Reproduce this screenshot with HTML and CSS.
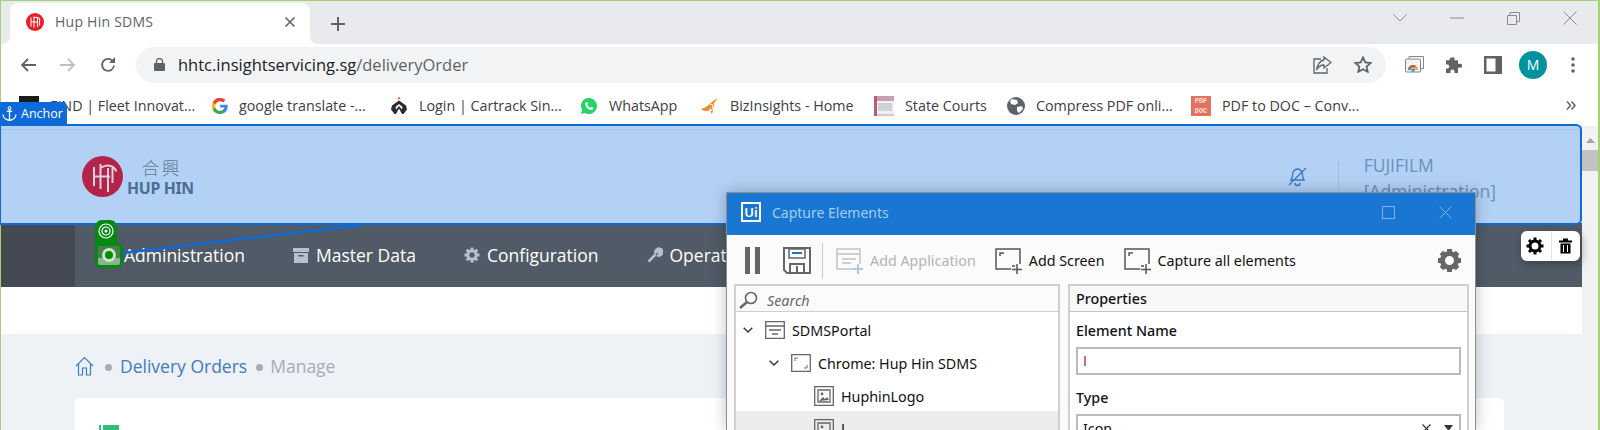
FILE: index.html
```html
<!DOCTYPE html>
<html lang="en">
<head>
    <meta charset="UTF-8">
    <title>Hup Hin SDMS</title>
    <link rel="stylesheet" href="styles.css">
</head>
<body>
    <div class="window">
        <div class="tabstrip">
            <div class="tab">
                <svg class="favicon" width="18" height="18" viewBox="0 0 18 18"><circle cx="9" cy="9" r="9" fill="#ef1c25"/><path d="M5 4.500v9M8 3.500v11M5 9h7M8 5c3-1.500 5-.5 6 2M11.500 5v9M13.500 6.500v6" fill="none" stroke="#fff" stroke-width="1.100"/></svg>
                <span class="tab-title">Hup Hin SDMS</span>
                <svg class="tab-close" width="12" height="12" viewBox="0 0 12 12"><path d="M1.500 1.500l9 9M10.500 1.500l-9 9" stroke="#5f6368" stroke-width="1.600"/></svg>
            </div>
            <svg class="new-tab" width="16" height="16" viewBox="0 0 16 16"><path d="M8 1v14M1 8h14" stroke="#5f6368" stroke-width="2"/></svg>
            <div class="win-controls">
                <svg width="14" height="8" viewBox="0 0 14 8"><path d="M.5.500L7 7 13.500.500" fill="none" stroke="#8a8d91"/></svg>
                <svg width="14" height="2" viewBox="0 0 14 2"><path d="M0 1h14" stroke="#8a8d91"/></svg>
                <svg width="13" height="13" viewBox="0 0 13 13"><path d="M.5 3.500h9v9h-9zM3 3V.5h9.500v9H10" fill="none" stroke="#8a8d91"/></svg>
                <svg width="14" height="14" viewBox="0 0 14 14"><path d="M.5.500l13 13M13.500.500l-13 13" stroke="#8a8d91"/></svg>
            </div>
        </div>

        <div class="toolbar">
            <svg class="nav-icon" width="16" height="14" viewBox="0 0 16 14"><path d="M16 7H2M8 1L2 7l6 6" fill="none" stroke="#5f6368" stroke-width="1.800"/></svg>
            <svg class="nav-icon nav-forward" width="16" height="14" viewBox="0 0 16 14"><path d="M0 7h14M8 1l6 6-6 6" fill="none" stroke="#bdc1c6" stroke-width="1.800"/></svg>
            <svg class="nav-icon" width="18" height="18" viewBox="0 0 18 18"><path d="M15 9.500A6 6 0 1 1 13.200 4.500" fill="none" stroke="#5f6368" stroke-width="1.800"/><path d="M16 1v6h-6z" fill="#5f6368"/></svg>
            <div class="omnibox">
                <svg width="11" height="13" viewBox="0 0 11 13"><path d="M2.500 5V3.500a3 3 0 0 1 6 0V5" fill="none" stroke="#5f6368" stroke-width="1.300"/><rect y="5" width="11" height="8" rx="1" fill="#5f6368"/></svg>
                <span class="url">hhtc.insightservicing.sg<span class="url-path">/deliveryOrder</span></span>
                <svg class="share" width="19" height="18" viewBox="0 0 19 18"><path d="M8 3H1v14h13v-5" fill="none" stroke="#5f6368" stroke-width="1.300"/><path d="M11 1l7 5.500-7 5.500V9C7 9 5 11 3.500 14 4 9 7 4.500 11 4z" fill="none" stroke="#5f6368" stroke-width="1.300"/></svg>
                <svg class="star" width="18" height="17" viewBox="0 0 18 17"><path d="M9 1.500l2.300 5 5.200.6-3.900 3.500 1.100 5.200L9 13.200l-4.700 2.600 1.100-5.200L1.500 7.100l5.200-.6z" fill="none" stroke="#5f6368" stroke-width="1.800"/></svg>
            </div>
            <div class="ext-icons">
                <svg width="19" height="17" viewBox="0 0 19 17"><path d="M4 2.500V.5h14.500v12H16" fill="none" stroke="#80868b"/><rect x=".5" y="3" width="15" height="13" rx="1" fill="#f1f3f4" stroke="#80868b"/><path d="M3 14a5 5 0 0 1 10 0h-2.500a2.500 2.500 0 0 0-5 0z" fill="#ea4335"/><path d="M3 14a5 5 0 0 1 2-4l1.500 2a2.500 2.500 0 0 0-1 2z" fill="#34a853"/><path d="M13 14a5 5 0 0 0-2-4l-1.500 2a2.500 2.500 0 0 1 1 2z" fill="#fbbc05"/><circle cx="8" cy="14" r="1.800" fill="#4285f4"/></svg>
                <svg width="18" height="18" viewBox="0 0 18 18"><path d="M7 1.500h3.500v2.700a1.800 1.800 0 0 1 0 0H14v3.500h2.200a2 2 0 0 1 0 4H14V17h-3.500v-1.600a2 2 0 0 0-4 0V17H2v-4.500h1.300a2 2 0 0 0 0-4H2V4.200h3.500V3.500A2 2 0 0 1 7 1.500z" fill="#5f6368"/></svg>
                <svg class="ext-panel" width="18" height="18" viewBox="0 0 18 18"><path d="M0 0h18v18H0zM2.500 2.500v13h9v-13z" fill="#5f6368" fill-rule="evenodd"/></svg>
                <span class="avatar">M</span>
                <svg width="4" height="16" viewBox="0 0 4 16"><circle cx="2" cy="2" r="1.800" fill="#5f6368"/><circle cx="2" cy="8" r="1.800" fill="#5f6368"/><circle cx="2" cy="14" r="1.800" fill="#5f6368"/></svg>
            </div>
        </div>

        <div class="bookmarks">
            <a class="bookmark w-fleet"><span class="bm-black"></span>FIND | Fleet Innovat...</a>
            <a class="bookmark w-google">
                <svg width="16" height="16" viewBox="0 0 16 16"><path d="M15.700 8.200c0-.6 0-1-.1-1.500H8v2.900h4.400c-.2 1-.8 1.800-1.600 2.400v2h2.600c1.500-1.400 2.300-3.400 2.300-5.800z" fill="#4285f4"/><path d="M8 16c2.200 0 4-.7 5.400-2l-2.600-2c-.7.500-1.700.8-2.800.8-2.100 0-3.900-1.400-4.600-3.400H.7v2.100A8 8 0 0 0 8 16z" fill="#34a853"/><path d="M3.400 9.400a4.800 4.800 0 0 1 0-3V4.300H.7a8 8 0 0 0 0 7.200z" fill="#fbbc05"/><path d="M8 3.200c1.200 0 2.300.4 3.100 1.200l2.400-2.300A8 8 0 0 0 .7 4.300l2.700 2.100C4.100 4.500 5.900 3.200 8 3.200z" fill="#ea4335"/></svg>
                google translate -...
            </a>
            <a class="bookmark w-cartrack">
                <svg width="18" height="18" viewBox="0 0 18 18"><circle cx="9" cy="1.300" r="1.200" fill="#e8772e"/><path d="M9 3.500l7 5 1 4-3.500 4.500H12L9 11.500 6 17H4.500L1 12.500l1-4z" fill="#2b2b2b"/><path d="M9 7l3.500 3-.5 2.500L9 9l-3 3.500-.5-2.500z" fill="#fff"/></svg>
                Login | Cartrack Sin...
            </a>
            <a class="bookmark w-whatsapp">
                <svg width="18" height="18" viewBox="0 0 18 18"><path d="M9 1a8 8 0 0 0-6.800 12.200L1 17l3.900-1.100A8 8 0 1 0 9 1z" fill="#25d366"/><path d="M6.500 5c-.5 0-1.300.7-1.300 2 0 2.600 3.300 6 6 6 1.300 0 2.100-.8 2.100-1.500v-.8l-2-1-.9 1C9 10.200 7.800 9 7.300 7.800l.9-.9-.9-1.900z" fill="#fff"/></svg>
                WhatsApp
            </a>
            <a class="bookmark w-biz">
                <svg width="18" height="18" viewBox="0 0 18 18"><path d="M0 12C4 11 8 8 12 4l5-3-4 5c0 4-1 8-2 11-1-1-2-3-1-6l-3 3c-2 0-5 0-7-2z" fill="#f28a2e"/><path d="M9 8c2-1 3-1 3 1s-1 4-2 5" fill="none" stroke="#fff"/></svg>
                BizInsights - Home
            </a>
            <a class="bookmark w-courts">
                <svg width="20" height="20" viewBox="0 0 20 20"><rect width="20" height="20" fill="#f3eeef"/><rect width="20" height="5" fill="#c9a0ac"/><rect x="4" y="7" width="14" height="8" fill="#cfd2d4"/><rect width="3" height="20" fill="#b75d78"/><rect x="3" y="18" width="17" height="2" fill="#ddc5cc"/></svg>
                State Courts
            </a>
            <a class="bookmark w-compress">
                <svg width="18" height="18" viewBox="0 0 18 18"><circle cx="9" cy="9" r="9" fill="#5f6368"/><path d="M5 2l5 1 1 3-3 2-4-1-1-3zM10 10l5-1 1 3-4 4-2-2z" fill="#fff"/></svg>
                Compress PDF onli...
            </a>
            <a class="bookmark w-pdf">
                <span class="pdf-icon">PDF<br>DOC</span>
                PDF to DOC – Conv...
            </a>
            <svg class="more" width="10" height="9" viewBox="0 0 10 9"><path d="M1 .5l3.500 4L1 8.500M5.500.5l3.500 4-3.500 4" fill="none" stroke="#5f6368" stroke-width="1.500"/></svg>
        </div>

        <div class="viewport">
            <div class="page">
                <header class="site-header">
                    <div class="logo">
                        <svg class="logo-mark" width="41" height="41" viewBox="0 0 41 41"><circle cx="20.500" cy="20.500" r="20.500" fill="#b32548"/><path d="M12 11v19M18.500 8v25M12 20.500h16M18.500 12c6-4 13-3 16 3.500M26 12v24M30.500 12v15" fill="none" stroke="#dfd0e0" stroke-width="2"/></svg>
                        <div class="logo-text">
                            <span class="logo-cjk">合興</span>
                            <span class="logo-latin">HUP HIN</span>
                        </div>
                    </div>
                    <div class="header-user">
                        <svg width="22" height="22" viewBox="0 0 22 22"><path d="M5 15c2-2 1-5 2-7.500C8 5 10 4 11.500 4S15 5 16 7.500c1 2.500 0 5 2 7.500H5zM9 18a2.500 2.500 0 0 0 5 0M3 20L20 3" fill="none" stroke="#3f76bd" stroke-width="1.400"/></svg>
                        <span class="header-sep"></span>
                        <div class="user-name">FUJIFILM<br>[Administration]</div>
                    </div>
                </header>

                <nav class="site-nav">
                    <div class="nav-side"></div>
                    <div class="nav-items">
                        <a class="nav-item">Administration</a>
                        <a class="nav-item">
                            <svg width="16" height="15" viewBox="0 0 16 15"><path d="M0 0h16v4H0zM1 5h14v10H1z" fill="#b8c0c9"/><rect x="5.500" y="7" width="5" height="1.500" fill="#505b67"/></svg>
                            Master Data
                        </a>
                        <a class="nav-item">
                            <svg width="16" height="16" viewBox="0 0 16 16"><circle cx="8" cy="8" r="4.200" fill="none" stroke="#b8c0c9" stroke-width="3"/><path d="M8 .5v3M8 12.500v3M.5 8h3M12.500 8h3M2.700 2.700l2.100 2.100M11.200 11.200l2.100 2.100M13.300 2.700l-2.100 2.100M4.800 11.200l-2.100 2.100" stroke="#b8c0c9" stroke-width="3"/></svg>
                            Configuration
                        </a>
                        <a class="nav-item">
                            <svg width="16" height="16" viewBox="0 0 16 16"><path d="M1.500 14.500l7-7M9 7a3.500 3.500 0 0 1 4.500-5L11 4.500l.5 1 1 .5L15 3.500A3.500 3.500 0 0 1 10 8" fill="none" stroke="#b8c0c9" stroke-width="2.500"/></svg>
                            Operations
                        </a>
                    </div>
                </nav>

                <div class="nav-gap"></div>

                <main class="content">
                    <div class="breadcrumb">
                        <svg class="crumb-home" width="19" height="20" viewBox="0 0 19 20"><path d="M1 10l8.500-8.500L18 10M3.500 8v11h4v-7h4v7h4V8" fill="none" stroke="#3f7cbd" stroke-width="1.200"/></svg>
                        <span class="crumb-dot"></span>
                        <a class="crumb-link">Delivery Orders</a>
                        <span class="crumb-dot"></span>
                        <span class="crumb-current">Manage</span>
                    </div>
                    <div class="card">
                        <span class="card-icon"></span>
                    </div>
                </main>
            </div>
            <div class="scrollbar">
                <svg width="9" height="5" viewBox="0 0 9 5"><path d="M4.500 0L9 5H0z" fill="#a3a3a3"/></svg>
                <span class="scroll-thumb"></span>
            </div>
        </div>
    </div>

    <!-- capture overlay drawn over the browser -->
    <div class="anchor-box"></div>
    <div class="anchor-tag">
        <svg width="15" height="15" viewBox="0 0 14 14"><path d="M7 3v10.500M4.500 5h5M1 8c0 3 3 5 6 5.500 3-.5 6-2.500 6-5.500" fill="none" stroke="#fff" stroke-width="1.200"/><circle cx="7" cy="2" r="1.300" fill="none" stroke="#fff"/></svg>
        Anchor
    </div>
    <div class="target-top">
        <svg width="16" height="16" viewBox="0 0 16 16"><circle cx="8" cy="8" r="7" fill="none" stroke="#fff" stroke-width="1.200"/><circle cx="8" cy="8" r="4" fill="none" stroke="#fff" stroke-width="1.200"/><circle cx="8" cy="8" r="1.500" fill="#fff"/></svg>
    </div>
    <div class="target-main">
        <span class="target-ring"></span>
    </div>
    <svg class="anchor-line" width="300" height="40" viewBox="0 0 300 40"><path d="M0 30L238 2" stroke="#0d6ad8" stroke-width="2.500"/></svg>
    <div class="float-tools">
        <svg width="18" height="18" viewBox="0 0 18 18"><circle cx="9" cy="9" r="5" fill="none" stroke="#000" stroke-width="3"/><path d="M9 .5v3.500M9 14v3.500M.5 9H4M14 9h3.500M3 3l2.500 2.500M12.500 12.500L15 15M15 3l-2.500 2.500M5.500 12.500L3 15" stroke="#000" stroke-width="3"/></svg>
        <span class="float-sep"></span>
        <svg width="13" height="16" viewBox="0 0 13 15"><path d="M0 2h13v2H0zM4 0h5v2H4zM1.500 5h10v10h-10z" fill="#000"/><path d="M4.500 6.500v7M8.500 6.500v7" stroke="#fff"/></svg>
    </div>

    <section class="dialog">
        <div class="dialog-title">
            <span class="ui-logo">Ui</span>
            <span class="dialog-name">Capture Elements</span>
            <svg class="dialog-max" width="13" height="13" viewBox="0 0 13 13"><rect x=".5" y=".5" width="12" height="12" fill="none" stroke="#7fb2e6"/></svg>
            <svg width="13" height="13" viewBox="0 0 13 13"><path d="M.5.500l12 12M12.500.500l-12 12" stroke="#7fb2e6"/></svg>
        </div>
        <div class="dialog-tools">
            <svg width="15" height="27" viewBox="0 0 15 27"><path d="M0 0h5v27H0zM10 0h5v27h-5z" fill="#666"/></svg>
            <svg class="tool-save" width="28" height="27" viewBox="0 0 28 27"><path d="M1 1h26v25H4l-3-3z" fill="none" stroke="#666" stroke-width="2"/><path d="M6 2h16v9H6z" fill="none" stroke="#666" stroke-width="1.500"/><path d="M9 5h10v2H9z" fill="#1976d2"/><path d="M7 25v-8h14v8M14 19v6" fill="none" stroke="#666" stroke-width="2"/></svg>
            <span class="tool-sep"></span>
            <span class="tool tool-off">
                <svg width="28" height="26" viewBox="0 0 28 26"><path d="M18 21H1V1h23v15M1 6h23M6 11h14M6 15h9" fill="none" stroke="#c4c4c4" stroke-width="1.500"/><path d="M22 16v10M17 21h10" stroke="#a9cbea" stroke-width="2"/></svg>
                Add Application
            </span>
            <span class="tool">
                <svg width="28" height="26" viewBox="0 0 28 26"><path d="M16 21H1V1h24v15M5 8V5h4" fill="none" stroke="#555" stroke-width="1.500"/><path d="M17 18h3M22 16v10M17 21.500h10" stroke="#555" stroke-width="1.500"/></svg>
                Add Screen
            </span>
            <span class="tool">
                <svg width="28" height="26" viewBox="0 0 28 26"><path d="M16 21H1V1h24v15M5 8V5h4" fill="none" stroke="#555" stroke-width="1.500"/><path d="M17 18h3M22 16v10M17 21.500h10" stroke="#555" stroke-width="1.500"/></svg>
                Capture all elements
            </span>
            <svg class="tool-gear" width="25" height="25" viewBox="0 0 25 25"><circle cx="12.500" cy="12.500" r="7" fill="none" stroke="#666" stroke-width="5"/><path d="M12.500 1v4M12.500 20v4M1 12.500h4M20 12.500h4M4.400 4.400l3 3M17.600 17.600l3 3M20.600 4.400l-3 3M7.400 17.600l-3 3" stroke="#666" stroke-width="5"/></svg>
        </div>
        <div class="dialog-body">
            <div class="tree-pane">
                <div class="search-row">
                    <svg width="19" height="18" viewBox="0 0 19 18"><circle cx="12" cy="7" r="5.500" fill="none" stroke="#666" stroke-width="1.600"/><path d="M8 11l-7 6" stroke="#666" stroke-width="2.500"/></svg>
                    <span class="search-text">Search</span>
                </div>
                <div class="tree-row level-0">
                    <svg class="chev" width="10" height="6" viewBox="0 0 10 6"><path d="M.7.700L5 5 9.300.700" fill="none" stroke="#333" stroke-width="1.400"/></svg>
                    <svg class="tree-icon" width="20" height="18" viewBox="0 0 20 18"><path d="M.7.700h18.600v16.600H.7zM.7 5h18.600M4 9h12M7 13h6" fill="none" stroke="#666" stroke-width="1.300"/></svg>
                    SDMSPortal
                </div>
                <div class="tree-row level-1">
                    <svg class="chev" width="10" height="6" viewBox="0 0 10 6"><path d="M.7.700L5 5 9.300.700" fill="none" stroke="#333" stroke-width="1.400"/></svg>
                    <svg class="tree-icon" width="20" height="18" viewBox="0 0 20 18"><path d="M.7.700h18.600v16.600H.7z" fill="none" stroke="#666" stroke-width="1.300"/><path d="M4 7V4h3M16 11v3h-3" fill="none" stroke="#666"/></svg>
                    Chrome: Hup Hin SDMS
                </div>
                <div class="tree-row level-2">
                    <svg class="tree-icon" width="20" height="20" viewBox="0 0 20 20"><path d="M.7.700h18.600v18.600H.7zM4 4h12v12H4z" fill="none" stroke="#666" stroke-width="1.300"/><circle cx="8" cy="8" r="1.400" fill="#666"/><path d="M5 15l4-4 2 2 2-2 2 3z" fill="#666"/></svg>
                    HuphinLogo
                </div>
                <div class="tree-row level-2 is-selected">
                    <svg class="tree-icon" width="20" height="20" viewBox="0 0 20 20"><path d="M.7.700h18.600v18.600H.7zM4 4h12v12H4z" fill="none" stroke="#666" stroke-width="1.300"/><circle cx="8" cy="8" r="1.400" fill="#666"/><path d="M5 15l4-4 2 2 2-2 2 3z" fill="#666"/></svg>
                    <span class="plain-i">I</span>
                </div>
            </div>
            <div class="props-pane">
                <div class="props-head">Properties</div>
                <div class="props-body">
                    <label class="prop-label">Element Name</label>
                    <div class="prop-input"><span class="plain-i caret-red">I</span></div>
                    <label class="prop-label">Type</label>
                    <div class="prop-input prop-select">
                        Icon
                        <span class="select-btns">
                            <svg width="9" height="9" viewBox="0 0 9 9"><path d="M.5.500l8 8M8.500.500l-8 8" stroke="#333" stroke-width="1.200"/></svg>
                            <svg width="9" height="6" viewBox="0 0 9 6"><path d="M0 0h9L4.500 6z" fill="#333"/></svg>
                        </span>
                    </div>
                </div>
            </div>
        </div>
    </section>
</body>
</html>
```

FILE: styles.css
```css
* {
    box-sizing: border-box;
}
html, body {
    height: 100%;
}
body {
    margin: 0;
    height: 430px;
    overflow: hidden;
    position: relative;
    font-family: "Open Sans", "Noto Sans", sans-serif;
    background: #fff;
}
a {
    text-decoration: none;
    color: inherit;
}
svg {
    flex: none;
    display: block;
}

.window {
    height: 430px;
    display: flex;
    flex-direction: column;
    padding: 1px 2px 0 1px;
    background: #a6d170;
}

/* browser chrome */
.tabstrip {
    height: 43px;
    flex: none;
    display: flex;
    align-items: flex-end;
    padding-left: 9px;
    background: #e8eaed;
}
.tab {
    position: relative;
    width: 300px;
    height: 41px;
    display: flex;
    align-items: center;
    padding: 0 14px 4px 16px;
    background: #fff;
    border-radius: 8px 8px 0 0;
    font-size: 14px;
    color: #5f6368;
}
.tab::before, .tab::after {
    content: "";
    position: absolute;
    bottom: 0;
    width: 8px;
    height: 8px;
}
.tab::before {
    left: -8px;
    background: radial-gradient(circle at 0 0, #e8eaed 8px, #fff 8.500px);
}
.tab::after {
    right: -8px;
    background: radial-gradient(circle at 100% 0, #e8eaed 8px, #fff 8.500px);
}
.tab-title {
    flex: 1;
    margin-left: 11px;
    letter-spacing: 0.25px;
}
.new-tab {
    margin: 0 0 12px 20px;
}
.win-controls {
    margin-left: auto;
    align-self: center;
    display: flex;
    align-items: center;
    gap: 43px;
    margin-bottom: 9px;
    padding-right: 21px;
}
.toolbar {
    height: 41px;
    flex: none;
    display: flex;
    align-items: center;
    padding-left: 19px;
    background: #fff;
}
.nav-icon {
    margin-right: 24px;
}
.nav-forward {
    margin-right: 23px;
}
.omnibox {
    width: 1250px;
    height: 36px;
    flex: none;
    margin-left: -5px;
    display: flex;
    align-items: center;
    padding: 0 14px 0 18px;
    border-radius: 18px;
    background: #f1f3f4;
}
.url {
    margin-left: 13px;
    font-size: 16.500px;
    color: #202124;
}
.url-path {
    color: #5f6368;
}
.share {
    margin-left: auto;
}
.star {
    margin-left: 22px;
}
.ext-icons {
    display: flex;
    align-items: center;
    gap: 20px;
    margin-left: 19px;
}
.ext-panel {
    margin-left: 2px;
}
.avatar {
    width: 28px;
    height: 28px;
    margin: 0 4px 0 -3px;
    border-radius: 50%;
    background: #00939f;
    color: #fff;
    font-size: 14px;
    line-height: 28px;
    text-align: center;
}
.bookmarks {
    height: 41px;
    flex: none;
    display: flex;
    align-items: center;
    padding: 0 22px 0 18px;
    background: #fff;
    font-size: 14.300px;
    color: #3c4043;
}
.bookmark {
    display: flex;
    align-items: center;
    gap: 11px;
    white-space: nowrap;
}
.w-fleet { width: 193px; }
.w-google { width: 178px; }
.w-cartrack { width: 190px; }
.w-whatsapp { width: 121px; }
.w-biz { width: 173px; }
.w-courts { width: 133px; }
.w-compress { width: 184px; }
.bm-black {
    width: 20px;
    height: 20px;
    background: #1c1c1c;
}
.pdf-icon {
    width: 20px;
    height: 20px;
    background: #e2735f;
    color: #fbe5df;
    font-family: "Liberation Mono", monospace;
    font-size: 7px;
    font-weight: 700;
    line-height: 10px;
    text-align: center;
}
.more {
    margin-left: auto;
}

/* page in the browser */
.viewport {
    flex: 1;
    min-height: 0;
    display: flex;
    background: #fff;
}
.page {
    flex: 1;
    min-width: 0;
    display: flex;
    flex-direction: column;
}
.site-header {
    height: 97px;
    flex: none;
    display: flex;
    align-items: center;
    padding: 0 86px 2px 81px;
    border-top: 5px solid #b3d1f5;
    background: #b3d1f5;
}
.logo {
    display: flex;
    align-items: center;
    gap: 4px;
}
.logo-text {
    display: flex;
    flex-direction: column;
    align-items: center;
    margin-top: 1px;
}
.logo-cjk {
    font-family: "Noto Sans CJK TC", "Noto Sans CJK SC", serif;
    font-size: 18px;
    font-weight: 300;
    line-height: 20px;
    letter-spacing: 2px;
    color: #62799a;
    margin: 0 0 2px 2px;
}
.logo-latin {
    font-family: "Noto Sans", sans-serif;
    font-size: 15.800px;
    font-weight: 700;
    line-height: 18px;
    letter-spacing: -0.3px;
    color: #4c6d96;
}
.header-user {
    margin-left: auto;
    display: flex;
    align-items: center;
    color: #6a8fc0;
    font-size: 17.500px;
    line-height: 26px;
}
.header-sep {
    width: 1px;
    height: 30px;
    margin: 0 25px 0 30px;
    background: #a2bfe2;
}
.user-name {
    margin-top: 4px;
    height: 52px;
}
.site-nav {
    height: 64px;
    flex: none;
    display: flex;
    background: #505b67;
}
.nav-side {
    width: 74px;
    background: #454954;
}
.nav-items {
    flex: 1;
    display: flex;
    align-items: center;
    padding-left: 49px;
    gap: 48px;
    color: #fff;
    font-size: 17.500px;
}
.nav-item {
    display: flex;
    align-items: center;
    gap: 7px;
}
.nav-gap {
    height: 47px;
    flex: none;
    background: #fff;
}
.content {
    flex: 1;
    padding: 0 78px 0 74px;
    background: #eef1f6;
}
.breadcrumb {
    height: 64px;
    display: flex;
    align-items: center;
    gap: 9px;
    font-size: 17.500px;
}
.crumb-home {
    margin-right: 2px;
}
.crumb-dot {
    width: 7px;
    height: 7px;
    margin: 3px -1px 0 0;
    border-radius: 50%;
    background: #a6adb8;
}
.crumb-link {
    color: #3f7cbd;
}
.crumb-current {
    margin-left: -1px;
    color: #a6adb8;
}
.card {
    height: 60px;
    padding: 27px 0 0 24px;
    border-radius: 5px 5px 0 0;
    background: #fff;
}
.card-icon {
    display: block;
    width: 20px;
    height: 6px;
    background: linear-gradient(90deg, #2fc07c 2px, #fff 2px, #fff 4px, #2fc07c 4px);
}
.scrollbar {
    width: 16px;
    flex: none;
    display: flex;
    flex-direction: column;
    align-items: center;
    padding-top: 12px;
    background: #f1f1f1;
}
.scroll-thumb {
    width: 16px;
    height: 21px;
    margin-top: 7px;
    background: #c1c1c1;
}

/* capture overlay */
.anchor-box {
    position: absolute;
    left: 0;
    top: 124px;
    width: 1582px;
    height: 101px;
    border: 2px solid #0d6ad8;
    border-left-width: 1px;
    border-radius: 0 6px 6px 0;
}
.anchor-box::after {
    content: "";
    position: absolute;
    left: 0;
    right: 0;
    top: 3px;
    height: 1px;
    background: #a3c4ea;
}
.anchor-tag {
    position: absolute;
    left: 0;
    top: 102px;
    width: 67px;
    height: 23px;
    display: flex;
    align-items: center;
    gap: 4px;
    padding-left: 2px;
    border-radius: 0 5px 0 0;
    background: #0d6ad8;
    color: #fff;
    font-size: 12.500px;
}
.anchor-line {
    position: absolute;
    left: 123px;
    top: 223px;
}
.target-top {
    position: absolute;
    left: 95px;
    top: 220px;
    width: 22px;
    height: 24px;
    padding: 3px;
    border-radius: 7px 7px 0 0;
    background: #048a10;
}
.target-main {
    position: absolute;
    left: 95px;
    top: 243px;
    width: 28px;
    height: 25px;
    display: flex;
    align-items: flex-start;
    justify-content: center;
    padding: 2px 1px 0 0;
    border: 3px solid #048a10;
    border-radius: 0 5px 5px 5px;
    background: linear-gradient(#4f7a58 62%, #8fb092 62%);
}
.target-ring {
    width: 14px;
    height: 14px;
    border: 3.500px solid #c3ecba;
    border-radius: 50%;
    background: #048a10;
}
.float-tools {
    position: absolute;
    left: 1521px;
    top: 231px;
    width: 59px;
    height: 30px;
    display: flex;
    align-items: center;
    padding-left: 5px;
    border-radius: 6px;
    background: #fff;
    box-shadow: 2px 3px 8px rgba(0, 0, 0, 0.3);
}
.float-sep {
    width: 1px;
    height: 30px;
    margin: 0 7px;
    background: #e4e4e4;
}

/* capture elements dialog */
.dialog {
    position: absolute;
    left: 726px;
    top: 192px;
    width: 750px;
    height: 238px;
    overflow: hidden;
    border: 1px solid #8a8f96;
    border-bottom: 0;
    background: #fbfbfb;
    box-shadow: 0 0 14px rgba(0, 0, 0, 0.25);
    font-family: "Noto Sans", "Open Sans", sans-serif;
    color: #111;
}
.dialog-title {
    height: 42px;
    display: flex;
    align-items: center;
    padding: 0 23px 4px 14px;
    background: #1976d2;
}
.ui-logo {
    width: 20px;
    height: 20px;
    border: 2px solid #fff;
    color: #fff;
    background: #1976d2;
    font-size: 13px;
    font-weight: 600;
    line-height: 16px;
    text-align: center;
}
.dialog-name {
    margin-left: 11px;
    color: #a6ccf1;
    font-size: 14px;
}
.dialog-max {
    margin: 0 44px 0 auto;
}
.dialog-tools {
    height: 49px;
    display: flex;
    align-items: center;
    padding: 2px 13px 0 18px;
    font-size: 14.300px;
}
.tool-save {
    margin-left: 23px;
}
.tool-sep {
    width: 1px;
    height: 36px;
    margin: 0 13px 0 11px;
    background: #c8c8c8;
}
.tool {
    display: flex;
    align-items: center;
    gap: 6px;
    margin-right: 19px;
}
.tool-off {
    color: #b4b4b4;
}
.tool-gear {
    margin-left: auto;
}
.dialog-body {
    display: flex;
    gap: 8px;
    padding: 0 6px 0 7px;
    height: 170px;
}
.tree-pane, .props-pane {
    border: 2px solid #cfcfcf;
    background: #fff;
    font-size: 14.300px;
}
.tree-pane {
    width: 326px;
    flex: none;
}
.props-pane {
    flex: 1;
}
.search-row {
    height: 26px;
    display: flex;
    align-items: center;
    gap: 9px;
    padding: 3px 0 0 3px;
    border-bottom: 1px solid #cfcfcf;
    background: #fbfbfb;
}
.search-text {
    font-style: italic;
    color: #666;
}
.tree-row {
    height: 33px;
    display: flex;
    align-items: center;
    padding-top: 3px;
}
.level-0 { padding-left: 7px; }
.level-1 { padding-left: 33px; }
.level-2 { padding-left: 78px; }
.chev { margin-right: 12px; }
.tree-icon { margin-right: 7px; }
.is-selected {
    background: #ececec;
}
.plain-i {
    font-family: "Liberation Sans", sans-serif;
    font-weight: 400;
}
.props-head {
    height: 26px;
    padding-left: 6px;
    line-height: 26px;
    font-weight: 500;
    background: #f8f8f8;
    border-bottom: 1px solid #c4c4c4;
}
.props-body {
    padding: 8px 6px 0;
}
.prop-label {
    display: block;
    height: 22px;
    line-height: 22px;
    font-weight: 500;
}
.prop-input {
    height: 28px;
    margin: 5px 0 12px;
    padding-left: 5px;
    display: flex;
    align-items: center;
    border: 2px solid #bbb;
    background: #fff;
}
.caret-red {
    color: #a03a2c;
}
.prop-select {
    justify-content: space-between;
    padding-right: 6px;
}
.select-btns {
    display: flex;
    align-items: center;
    gap: 13px;
}
```
